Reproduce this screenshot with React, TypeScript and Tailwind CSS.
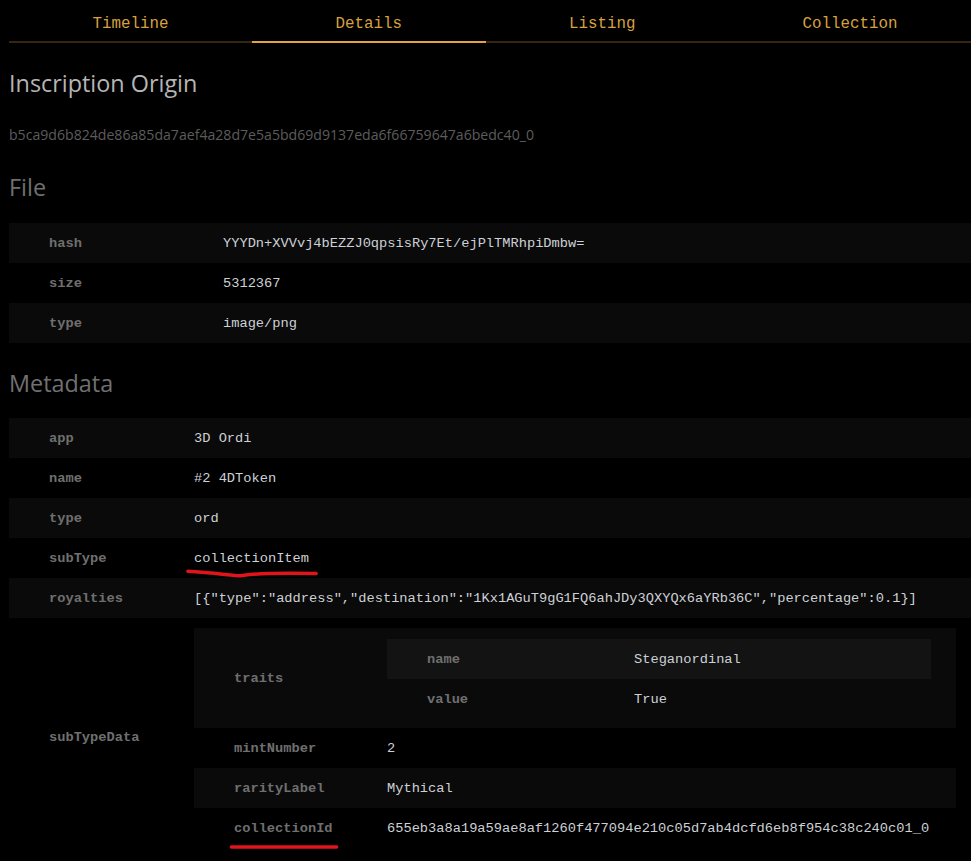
import React from "react";

type Row = { k: string; v: React.ReactNode };

const mono = "font-['Liberation_Mono','DejaVu_Sans_Mono',monospace]";
const sans = "font-['Open_Sans','Noto_Sans',sans-serif]";

const tabs = ["Timeline", "Details", "Listing", "Collection"];

function Tabs({ active }: { active: string }) {
  return (
    <div className="flex">
      {tabs.map((t) => (
        <div
          key={t}
          className={`flex h-[43px] flex-auto items-center justify-center border-b-2 pt-[8px] text-[15.8px] text-[#d9a03f] ${mono} ${
            t === active ? "border-[#e3a33f]" : "border-[#36260f]"
          }`}
        >
          {t}
        </div>
      ))}
    </div>
  );
}

// Striped key/value table; nested tables stack the stripe tint
function KvTable({ rows, keyWidth }: { rows: Row[]; keyWidth: string }) {
  return (
    <div className="flex flex-col">
      {rows.map((r, i) => (
        <div key={r.k} className={`flex items-center ${i % 2 === 0 ? "bg-white/[0.04]" : ""}`}>
          <div className={`${keyWidth} shrink-0 pl-10 pt-px text-[13.7px] font-bold leading-5 text-[#6f6f6f] ${mono}`}>
            {r.k}
          </div>
          <div className={`min-w-0 flex-1 pt-[11px] pb-[9px] pr-[25px] text-[13.7px] leading-5 text-[#cdd1d6] ${mono}`}>
            {r.v}
          </div>
        </div>
      ))}
    </div>
  );
}

function Scribble({ className, d }: { className: string; d: string }) {
  return (
    <svg
      className={`pointer-events-none absolute ${className}`}
      viewBox="0 0 140 12"
      preserveAspectRatio="none"
      fill="none"
      aria-hidden
    >
      <path d={d} stroke="#e0141a" strokeWidth="3.5" strokeLinecap="round" strokeLinejoin="round" vectorEffect="non-scaling-stroke" />
    </svg>
  );
}

export default function App() {
  const fileRows: Row[] = [
    { k: "hash", v: "YYYDn+XVVvj4bEZZJ0qpsisRy7Et/ejPlTMRhpiDmbw=" },
    { k: "size", v: "5312367" },
    { k: "type", v: "image/png" },
  ];

  const traitRows: Row[] = [
    { k: "name", v: "Steganordinal" },
    { k: "value", v: "True" },
  ];

  const subTypeRows: Row[] = [
    {
      k: "traits",
      v: <KvTable rows={traitRows} keyWidth="w-[247px]" />,
    },
    { k: "mintNumber", v: "2" },
    { k: "rarityLabel", v: "Mythical" },
    {
      k: "collectionId",
      v: "655eb3a8a19a59ae8af1260f477094e210c05d7ab4dcfd6eb8f954c38c240c01_0",
    },
  ];

  const metaRows: Row[] = [
    { k: "app", v: "3D Ordi" },
    { k: "name", v: "#2 4DToken" },
    { k: "type", v: "ord" },
    {
      k: "subType",
      v: (
        <span className="relative inline-block">
          collectionItem
          <Scribble className="-left-[8px] top-[20px] h-[9px] w-[132px]" d="M2 3 C 30 5, 50 9, 58 9 C 72 6, 100 5, 138 6" />
        </span>
      ),
    },
    {
      k: "royalties",
      v: '[{"type":"address","destination":"1Kx1AGuT9gG1FQ6ahJDy3QXYQx6aYRb36C","percentage":0.1}]',
    },
  ];

  return (
    <div className="min-h-screen overflow-hidden bg-black">
      <div className="ml-[9px] w-[972px]">
        <Tabs active="Details" />

        <h2 className={`mt-[24px] text-[23.4px] leading-8 text-[#b5b5b5] ${sans}`}>Inscription Origin</h2>
        <p className={`mt-[26px] text-[14.1px] leading-5 text-[#5c5c5c] ${sans}`}>
          b5ca9d6b824de86a85da7aef4a28d7e5a5bd69d9137eda6f66759647a6bedc40_0
        </p>

        <h2 className={`mt-[26px] text-[23.4px] leading-8 text-[#707070] ${sans}`}>File</h2>
        <div className="mt-[20px]">
          <KvTable rows={fileRows} keyWidth="w-[214px]" />
        </div>

        <h2 className={`mt-[24px] text-[23.4px] leading-8 text-[#707070] ${sans}`}>Metadata</h2>
        <div className="mt-[19px]">
          <KvTable rows={metaRows} keyWidth="w-[185px]" />
          <div className="flex items-center">
            <div className={`w-[185px] shrink-0 pl-10 text-[13.7px] font-bold leading-5 text-[#6f6f6f] ${mono}`}>
              subTypeData
            </div>
            <div className="min-w-0 flex-1 py-[10px] pr-[25px]">
              <div className="flex flex-col">
                {subTypeRows.map((r, i) => (
                  <div key={r.k} className={`flex items-center ${i % 2 === 0 ? "bg-white/[0.04]" : ""}`}>
                    <div className={`relative w-[193px] shrink-0 pl-10 pt-px text-[13.7px] font-bold leading-5 text-[#6f6f6f] ${mono}`}>
                      {r.k}
                      {r.k === "collectionId" ? (
                        <Scribble className="left-[35px] top-[25px] h-[8px] w-[110px]" d="M3 6 L 137 6" />
                      ) : null}
                    </div>
                    <div className={`min-w-0 flex-1 pt-[11px] pb-[9px] pr-[25px] text-[13.7px] leading-5 text-[#cdd1d6] ${mono}`}>
                      {r.v}
                    </div>
                  </div>
                ))}
              </div>
            </div>
          </div>
        </div>
      </div>
    </div>
  );
}
